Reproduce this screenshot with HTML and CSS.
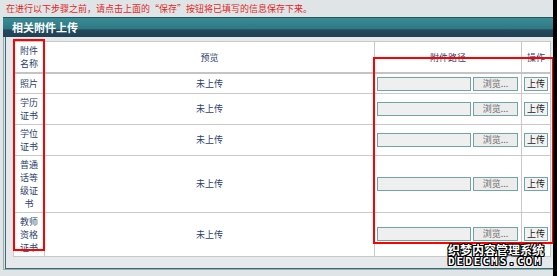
FILE: index.html
```html
<!DOCTYPE html>
<html lang="zh-CN">

<head>
    <meta charset="UTF-8">
    <meta name="viewport" content="width=device-width, initial-scale=1.0">
    <title>相关附件上传</title>
    <link rel="stylesheet" href="styles.css">
</head>

<body>
    <div class="page">
        <div class="notice">在进行以下步骤之前，请点击上面的“保存”按钮将已填写的信息保存下来。</div>

        <div class="panel">
            <div class="panel-title">相关附件上传</div>
            <div class="panel-body">
                <div class="panel-inner">
                    <table class="attach">
                        <tr class="head">
                            <th class="c-name">附件名称</th>
                            <th class="c-view">预览</th>
                            <th class="c-path">附件路径</th>
                            <th class="c-op">操作</th>
                        </tr>
                        <tr>
                            <td class="c-name">照片</td>
                            <td class="c-view">未上传</td>
                            <td class="c-path"><span class="path"></span><button class="browse">浏览...</button></td>
                            <td class="c-op"><button class="upload">上传</button></td>
                        </tr>
                        <tr>
                            <td class="c-name">学历证书</td>
                            <td class="c-view">未上传</td>
                            <td class="c-path"><span class="path"></span><button class="browse">浏览...</button></td>
                            <td class="c-op"><button class="upload">上传</button></td>
                        </tr>
                        <tr>
                            <td class="c-name">学位证书</td>
                            <td class="c-view">未上传</td>
                            <td class="c-path"><span class="path"></span><button class="browse">浏览...</button></td>
                            <td class="c-op"><button class="upload">上传</button></td>
                        </tr>
                        <tr>
                            <td class="c-name">普通话等级证书</td>
                            <td class="c-view">未上传</td>
                            <td class="c-path"><span class="path"></span><button class="browse">浏览...</button></td>
                            <td class="c-op"><button class="upload">上传</button></td>
                        </tr>
                        <tr>
                            <td class="c-name">教师资格证书</td>
                            <td class="c-view">未上传</td>
                            <td class="c-path"><span class="path"></span><button class="browse">浏览...</button></td>
                            <td class="c-op"><button class="upload">上传</button></td>
                        </tr>
                    </table>
                </div>
            </div>
        </div>

        <!-- 标注框 -->
        <div class="mark mark-name"></div>
        <div class="mark mark-file"></div>

        <div class="watermark">
            <div class="wm-cn">织梦内容管理系统</div>
            <div class="wm-en">DEDECMS.COM</div>
        </div>
    </div>
</body>

</html>
```

FILE: styles.css
```css
* {
    box-sizing: border-box;
}

body {
    margin: 0;
    background: #dfe5e7;
    font-family: "Noto Sans CJK SC", "DejaVu Sans", sans-serif;
    font-size: 9px;
}

.page {
    position: relative;
    width: 557px;
    height: 276px;
    border-right: 4px solid #000;
    overflow: hidden;
}

.notice {
    height: 17px;
    line-height: 17px;
    padding-left: 6px;
    color: #e2261f;
    white-space: nowrap;
}

.panel {
    margin-left: 3px;
}

.panel-title {
    height: 20px;
    line-height: 19px;
    padding-left: 9px;
    color: #fff;
    font-size: 11px;
    font-weight: bold;
    border-top: 1px solid #1d5a62;
    background: linear-gradient(#3b8b94 0, #2e7883 58%, #24485c 62%, #1f4154 100%);
}

.panel-body {
    border-left: 1px solid #a0a8aa;
    border-bottom: 1px solid #a0a8aa;
}

.panel-inner {
    margin-left: 1px;
    border-left: 1px solid #2f7078;
    border-bottom: 1px solid #2f7078;
    background: #e5e9eb;
    padding: 4px 3px 11px 7px;
}

.attach {
    width: 537px;
    border-collapse: collapse;
    table-layout: fixed;
    background: #fff;
    color: #2c3f6b;
}

.attach th,
.attach td {
    border: 1px solid #c9c9c9;
    padding: 2px 2px;
    line-height: 13px;
    font-weight: normal;
    text-align: center;
    vertical-align: middle;
}

.attach .head th {
    border-bottom: 2px solid #c4c4c4;
}

.attach .c-name {
    width: 31px;
}

.attach .c-view {
    width: 330px;
}

.attach .c-path {
    width: 147px;
    text-align: left;
    white-space: nowrap;
}

.attach .head .c-path {
    text-align: center;
}

.attach .c-op {
    width: 29px;
    padding: 2px 0;
}

.path {
    display: inline-block;
    width: 94px;
    height: 14px;
    vertical-align: middle;
    background: #efefef;
    border: 1px solid #6fa5a3;
}

.browse,
.upload {
    height: 14px;
    padding: 0;
    vertical-align: middle;
    font-family: inherit;
    font-size: 9px;
    line-height: 12px;
    border: 1px solid #6fa5a3;
    background: #ececec;
}

.browse {
    width: 45px;
    margin-left: 2px;
    color: #6a6a6a;
}

.upload {
    width: 24px;
    background: #f2f2f2;
    color: #222;
}

.mark {
    position: absolute;
    border: 2px solid #f00;
}

.mark-name {
    left: 13px;
    top: 39px;
    width: 32px;
    height: 212px;
}

.mark-file {
    left: 373px;
    top: 57px;
    width: 181px;
    height: 187px;
}

.watermark {
    position: absolute;
    left: 448px;
    top: 243px;
    width: 98px;
    color: #fff;
    font-weight: bold;
    text-shadow: 1px 0 0 #000, -1px 0 0 #000, 0 1px 0 #000, 0 -1px 0 #000,
        1px 1px 0 #000, -1px -1px 0 #000, 1px -1px 0 #000, -1px 1px 0 #000;
}

.wm-cn {
    font-size: 12px;
    line-height: 13px;
    white-space: nowrap;
}

.wm-en {
    font-family: "DejaVu Sans Mono", monospace;
    font-size: 11px;
    line-height: 12px;
    letter-spacing: 2px;
    white-space: nowrap;
}
```
